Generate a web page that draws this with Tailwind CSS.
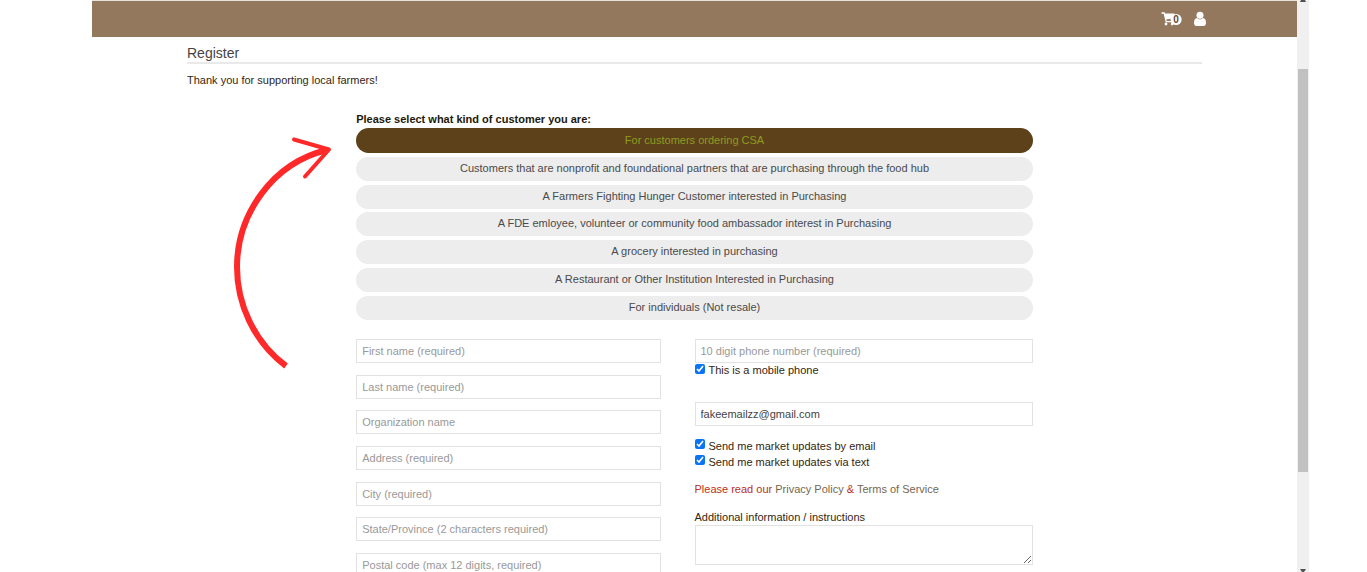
<!DOCTYPE html>
<html lang="en">
<head>
<meta charset="utf-8">
<meta name="viewport" content="width=device-width, initial-scale=1">
<title>Register</title>
<script src="https://cdn.jsdelivr.net/npm/@tailwindcss/browser@4"></script>
</head>
<body class="bg-white font-['Liberation_Sans',Arial,sans-serif] text-[11px] leading-4 text-[#33260f]">
<div class="relative flex h-screen overflow-hidden pl-[92px] pr-[58px]">
  <div class="min-w-0 flex-1">
    <header class="flex h-[37px] items-center justify-end gap-3 border-t border-[#e6e2dc] bg-[#93785d] pr-[91px]">
      <a href="#cart" aria-label="Cart, 0 items" class="flex items-center">
        <svg class="h-4 w-[21px]" viewBox="0 0 21 16" fill="none">
          <path d="M0.5 2H3.2L5.2 10.6H11" stroke="#fff" stroke-width="1.3"/>
          <path d="M3.4 2.6H13.5L12 7.4L4.7 8.6Z" fill="#fff"/>
          <circle cx="5" cy="13" r="1.4" fill="#fff"/>
          <circle cx="11.2" cy="13" r="1.4" fill="#fff"/>
          <rect x="9.6" y="3" width="11" height="11" rx="5.5" fill="#fff"/>
          <text x="15" y="12" text-anchor="middle" font-size="10" font-weight="700" fill="#5b4a3a">0</text>
        </svg>
      </a>
      <a href="#account" aria-label="Account">
        <svg class="h-4 w-3" viewBox="0 0 12 16" fill="#fff">
          <circle cx="6" cy="4.2" r="3.5"/>
          <path d="M3 7C1 7.3 0 9.4 0 11.8C0 13.8 0.8 15 2.3 15H9.7C11.2 15 12 13.8 12 11.8C12 9.4 11 7.3 9 7C7.4 8.7 4.6 8.7 3 7Z"/>
        </svg>
      </a>
    </header>

    <main class="px-[95px] pt-2">
      <h1 class="h-[19px] border-b-2 border-[#e9e9e9] text-sm leading-4 text-[#444]">Register</h1>
      <p class="mt-2">Thank you for supporting local farmers!</p>

      <form class="mx-auto mt-[23px] w-2/3">
        <h2 class="h-[17px] font-bold text-[#221808]">Please select what kind of customer you are:</h2>
        <div class="flex h-[192px] flex-col justify-between text-[#4a4a4a]">
          <button type="button" class="h-[25px] rounded-full bg-[#5c411a] pb-[2px] text-[#8f9c22]">For customers ordering CSA</button>
          <button type="button" class="h-6 rounded-full bg-[#ededed] pb-[2px]">Customers that are nonprofit and foundational partners that are purchasing through the food hub</button>
          <button type="button" class="h-6 rounded-full bg-[#ededed] pb-[2px]">A Farmers Fighting Hunger Customer interested in Purchasing</button>
          <button type="button" class="h-6 rounded-full bg-[#ededed] pb-[2px]">A FDE emloyee, volunteer or community food ambassador interest in Purchasing</button>
          <button type="button" class="h-6 rounded-full bg-[#ededed] pb-[2px]">A grocery interested in purchasing</button>
          <button type="button" class="h-6 rounded-full bg-[#ededed] pb-[2px]">A Restaurant or Other Institution Interested in Purchasing</button>
          <button type="button" class="h-6 rounded-full bg-[#ededed] pb-[2px]">For individuals (Not resale)</button>
        </div>

        <div class="mt-[19px] flex items-start justify-between">
          <div class="flex h-[238px] w-[45%] flex-col justify-between">
            <input type="text" aria-label="First name" placeholder="First name (required)" class="h-6 w-full border border-[#e2e2e2] px-[5px] placeholder:text-[#999]">
            <input type="text" aria-label="Last name" placeholder="Last name (required)" class="h-6 w-full border border-[#e2e2e2] px-[5px] placeholder:text-[#999]">
            <input type="text" aria-label="Organization name" placeholder="Organization name" class="h-6 w-full border border-[#e2e2e2] px-[5px] placeholder:text-[#999]">
            <input type="text" aria-label="Address" placeholder="Address (required)" class="h-6 w-full border border-[#e2e2e2] px-[5px] placeholder:text-[#999]">
            <input type="text" aria-label="City" placeholder="City (required)" class="h-6 w-full border border-[#e2e2e2] px-[5px] placeholder:text-[#999]">
            <input type="text" aria-label="State or province" placeholder="State/Province (2 characters required)" class="h-6 w-full border border-[#e2e2e2] px-[5px] placeholder:text-[#999]">
            <input type="text" aria-label="Postal code" placeholder="Postal code (max 12 digits, required)" class="h-6 w-full border border-[#e2e2e2] px-[5px] placeholder:text-[#999]">
          </div>

          <div class="w-1/2">
            <input type="tel" aria-label="Phone number" placeholder="10 digit phone number (required)" class="block h-6 w-full border border-[#e2e2e2] px-[5px] placeholder:text-[#999]">
            <label class="flex gap-1 leading-[14px]"><input type="checkbox" checked class="mt-px size-[10px] accent-[#0b74f5]">This is a mobile phone</label>
            <input type="email" aria-label="Email" value="fakeemailzz@gmail.com" class="mt-[25px] block h-6 w-full border border-[#e2e2e2] px-[5px] text-[#444]">
            <label class="mt-3 flex gap-1"><input type="checkbox" checked class="mt-px size-[10px] accent-[#0b74f5]">Send me market updates by email</label>
            <label class="flex gap-1"><input type="checkbox" checked class="mt-px size-[10px] accent-[#0b74f5]">Send me market updates via text</label>
            <p class="mt-[11px] text-[#b93020]">Please read our <a href="#privacy" class="text-[#75674f]">Privacy Policy</a> &amp; <a href="#terms" class="text-[#75674f]">Terms of Service</a></p>
            <label for="notes" class="mt-3 block">Additional information / instructions</label>
            <textarea id="notes" class="block h-10 w-full border border-[#e2e2e2] px-[5px]"></textarea>
          </div>
        </div>
      </form>
    </main>
  </div>

  <!-- Scrollbar -->
  <div class="flex w-3 flex-col items-center justify-between bg-[#f0f0f0]" aria-hidden="true">
    <svg class="h-[2px] w-[6px]" viewBox="0 0 6 2"><path d="M1 0H5L6 2H0Z" fill="#505050"/></svg>
    <div class="mb-[30px] h-[403px] w-[10px] bg-[#c1c1c1]"></div>
    <svg class="h-[3px] w-[6px]" viewBox="0 0 6 3"><path d="M0 0H6L4 3H2Z" fill="#505050"/></svg>
  </div>

  <!-- Arrow pointing at the CSA option -->
  <svg class="pointer-events-none absolute left-[230px] top-[130px] h-[245px] w-[105px]" viewBox="230 130 105 245" fill="none" stroke="#ff2929" aria-hidden="true">
    <path d="M286 366C253 341 237 303 237 267C237 215 272 163 327 150" stroke-width="6"/>
    <path d="M294 139.5L329 149.5L305 176.5" stroke-width="4" stroke-linecap="round" stroke-linejoin="round"/>
  </svg>
</div>
</body>
</html>
